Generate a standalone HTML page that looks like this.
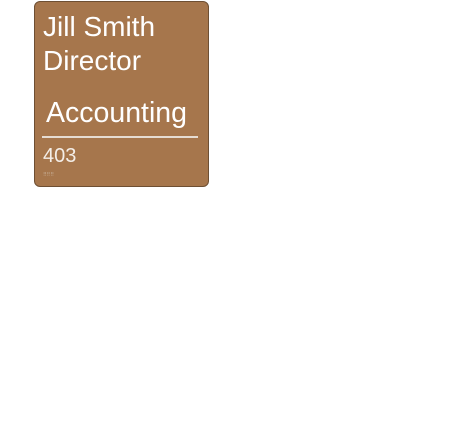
<html><body style="margin:0;background:#fff;width:471px;height:423px;position:relative;font-family:'Liberation Sans',sans-serif;">
<div style="position:absolute;left:34px;top:1px;width:173px;height:184px;background:#a6764c;border:1px solid #6e4f33;border-radius:6px;color:#fff;">
<div style="position:absolute;left:8px;top:8px;font-size:28px;line-height:34px;">Jill Smith<br>Director</div>
<div style="position:absolute;left:11px;top:95px;font-size:28.5px;line-height:32px;">Accounting</div>
<div style="position:absolute;left:7px;top:134px;width:156px;height:2px;background:#e6dcd2;"></div>
<div style="position:absolute;left:8px;top:143px;font-size:20px;line-height:22px;color:#f4eee8;">403</div>
<div style="position:absolute;left:8px;top:170px;font-size:5px;color:#c8b098;">⠿⠿⠿</div>
</div>
</body></html>
